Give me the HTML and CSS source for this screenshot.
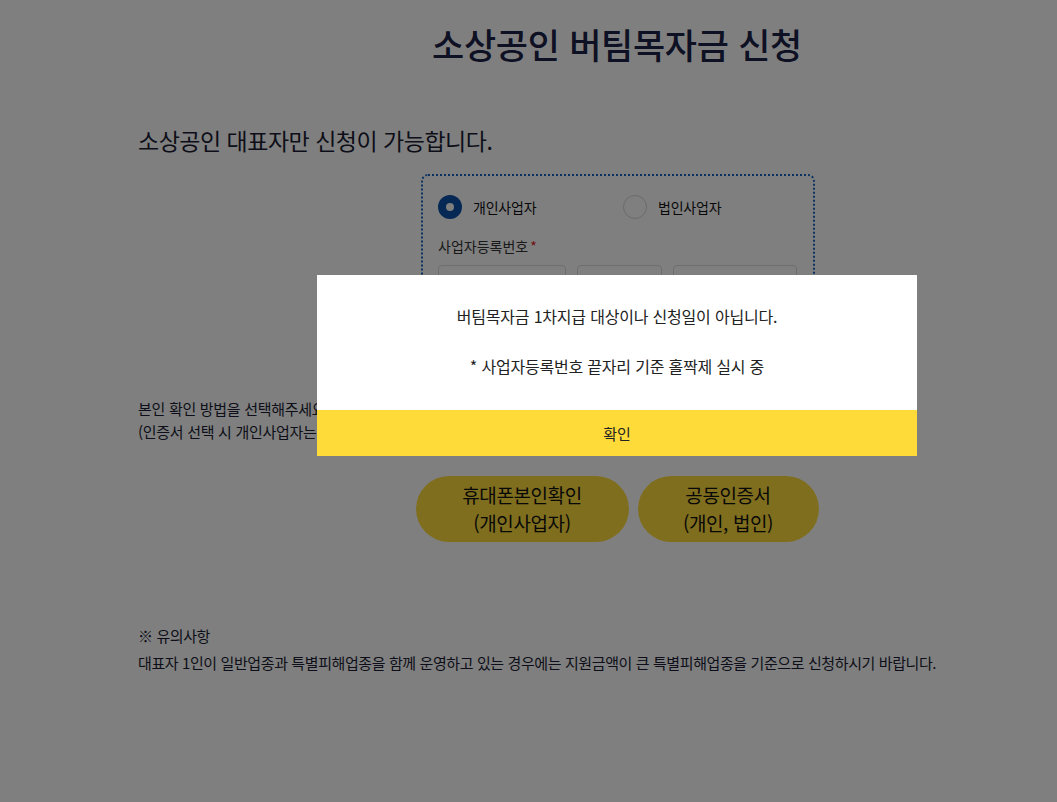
FILE: index.html
```html
<!DOCTYPE html>
<html lang="ko">
<head>
<meta charset="UTF-8">
<meta name="viewport" content="width=device-width, initial-scale=1.0">
<title>소상공인 버팀목자금 신청</title>
<link rel="stylesheet" href="styles.css">
</head>
<body>

<div class="page">
    <!-- 제목 -->
    <h1 class="page-title">소상공인 버팀목자금 신청</h1>
    <p class="lead">소상공인 대표자만 신청이 가능합니다.</p>

    <!-- 사업자 구분 / 등록번호 -->
    <div class="form-box">
        <div class="type-row">
            <label class="radio-item">
                <span class="radio checked"></span>
                <span class="radio-text">개인사업자</span>
            </label>
            <label class="radio-item">
                <span class="radio"></span>
                <span class="radio-text">법인사업자</span>
            </label>
        </div>
        <div class="field-label">사업자등록번호<span class="req">*</span></div>
        <div class="biz-num">
            <input type="text" class="num-input num-a" maxlength="3">
            <input type="text" class="num-input num-b" maxlength="2">
            <input type="text" class="num-input num-c" maxlength="5">
        </div>
    </div>

    <!-- 본인 확인 -->
    <div class="auth-guide">
        본인 확인 방법을 선택해주세요.<br>
        (인증서 선택 시 개인사업자는 개인 인증서, 법인사업자는 법인 인증서로 진행해주세요.)
    </div>
    <div class="auth-buttons">
        <button class="auth-btn phone">휴대폰본인확인<br>(개인사업자)</button>
        <button class="auth-btn cert">공동인증서<br>(개인, 법인)</button>
    </div>

    <!-- 유의사항 -->
    <div class="notice">
        <div class="notice-title">※ 유의사항</div>
        <p>대표자 1인이 일반업종과 특별피해업종을 함께 운영하고 있는 경우에는 지원금액이 큰 특별피해업종을 기준으로 신청하시기 바랍니다.</p>
    </div>
</div>

<!-- 알림 팝업 -->
<div class="dim"></div>
<div class="alert-pop">
    <div class="alert-body">
        <p>버팀목자금 1차지급 대상이나 신청일이 아닙니다.</p>
        <p>* 사업자등록번호 끝자리 기준 홀짝제 실시 중</p>
    </div>
    <button class="alert-ok">확인</button>
</div>

</body>
</html>
```

FILE: styles.css
```css
html, body {
    margin: 0;
    padding: 0;
    overflow: hidden;
}

body {
    font-family: "Noto Sans CJK KR", "Noto Sans", sans-serif;
    color: #222;
    background-color: #fff;
}

.page {
    width: 958px;
    margin-left: 138px;
}

.page-title {
    margin: 18px 0 0;
    text-align: center;
    font-size: 35px;
    font-weight: 500;
    letter-spacing: -0.3px;
    line-height: 52px;
    color: #1a2246;
}

.lead {
    margin: 54px 0 0;
    font-size: 23px;
    letter-spacing: -0.5px;
    line-height: 32px;
    color: #1a1d33;
}

.form-box {
    width: 360px;
    margin: 18px 0 0 283px;
    padding: 19px 15px 22px 15px;
    border: 2px dotted #1565c0;
    border-radius: 7px;
}

.type-row {
    display: grid;
    grid-template-columns: 185px 1fr;
}

.radio-item {
    display: flex;
    align-items: center;
}

.radio {
    width: 22px;
    height: 22px;
    border: 1px solid #d5d5d5;
    border-radius: 50%;
    background-color: #fff;
    margin: 0 11px 0 0;
    box-sizing: content-box;
}

.radio.checked {
    width: 8px;
    height: 8px;
    border: 8px solid #0a52a8;
}

.radio-text {
    font-size: 14px;
    letter-spacing: -0.2px;
    color: #111;
}

.field-label {
    margin-top: 17px;
    font-size: 14px;
    line-height: 20px;
    color: #333;
}

.req {
    color: #e02020;
    margin-left: 2px;
}

.biz-num {
    display: flex;
    gap: 11px;
    margin-top: 9px;
}

.num-input {
    height: 40px;
    box-sizing: border-box;
    border: 1px solid #dcdcdc;
    border-radius: 4px;
    background: #fff;
    padding: 0 10px;
    font-size: 14px;
}

.num-a { width: 128px; }
.num-b { width: 85px; }
.num-c { width: 124px; }

.auth-guide {
    margin-top: 68px;
    font-size: 15px;
    letter-spacing: -0.3px;
    line-height: 23px;
    color: #1a1d33;
}

.auth-buttons {
    display: flex;
    justify-content: center;
    gap: 9px;
    margin-top: 33px;
}

.auth-btn {
    height: 66px;
    border: none;
    border-radius: 33px;
    background-color: #ffdc3c;
    font-family: inherit;
    font-size: 19px;
    letter-spacing: -0.4px;
    line-height: 28px;
    color: #111;
    cursor: pointer;
}

.auth-btn.phone { width: 213px; }
.auth-btn.cert { width: 181px; }

.notice {
    margin-top: 83px;
    font-size: 15px;
    letter-spacing: -0.4px;
    color: #1a1d33;
}

.notice-title {
    line-height: 22px;
}

.notice p {
    margin: 5px 0 0;
    line-height: 22px;
}

.dim {
    position: fixed;
    left: 0;
    top: 0;
    right: 0;
    bottom: 0;
    background: rgba(0, 0, 0, 0.5);
}

.alert-pop {
    position: fixed;
    left: 317px;
    top: 275px;
    width: 600px;
    background: #fff;
}

.alert-body {
    padding: 29px 20px 32px;
    text-align: center;
}

.alert-body p {
    margin: 0;
    font-size: 16px;
    letter-spacing: -0.2px;
    line-height: 24px;
    color: #222;
}

.alert-body p + p {
    margin-top: 26px;
}

.alert-ok {
    display: block;
    width: 100%;
    height: 46px;
    border: none;
    background-color: #ffdb3a;
    font-family: inherit;
    font-size: 15px;
    color: #222;
    cursor: pointer;
}
```
